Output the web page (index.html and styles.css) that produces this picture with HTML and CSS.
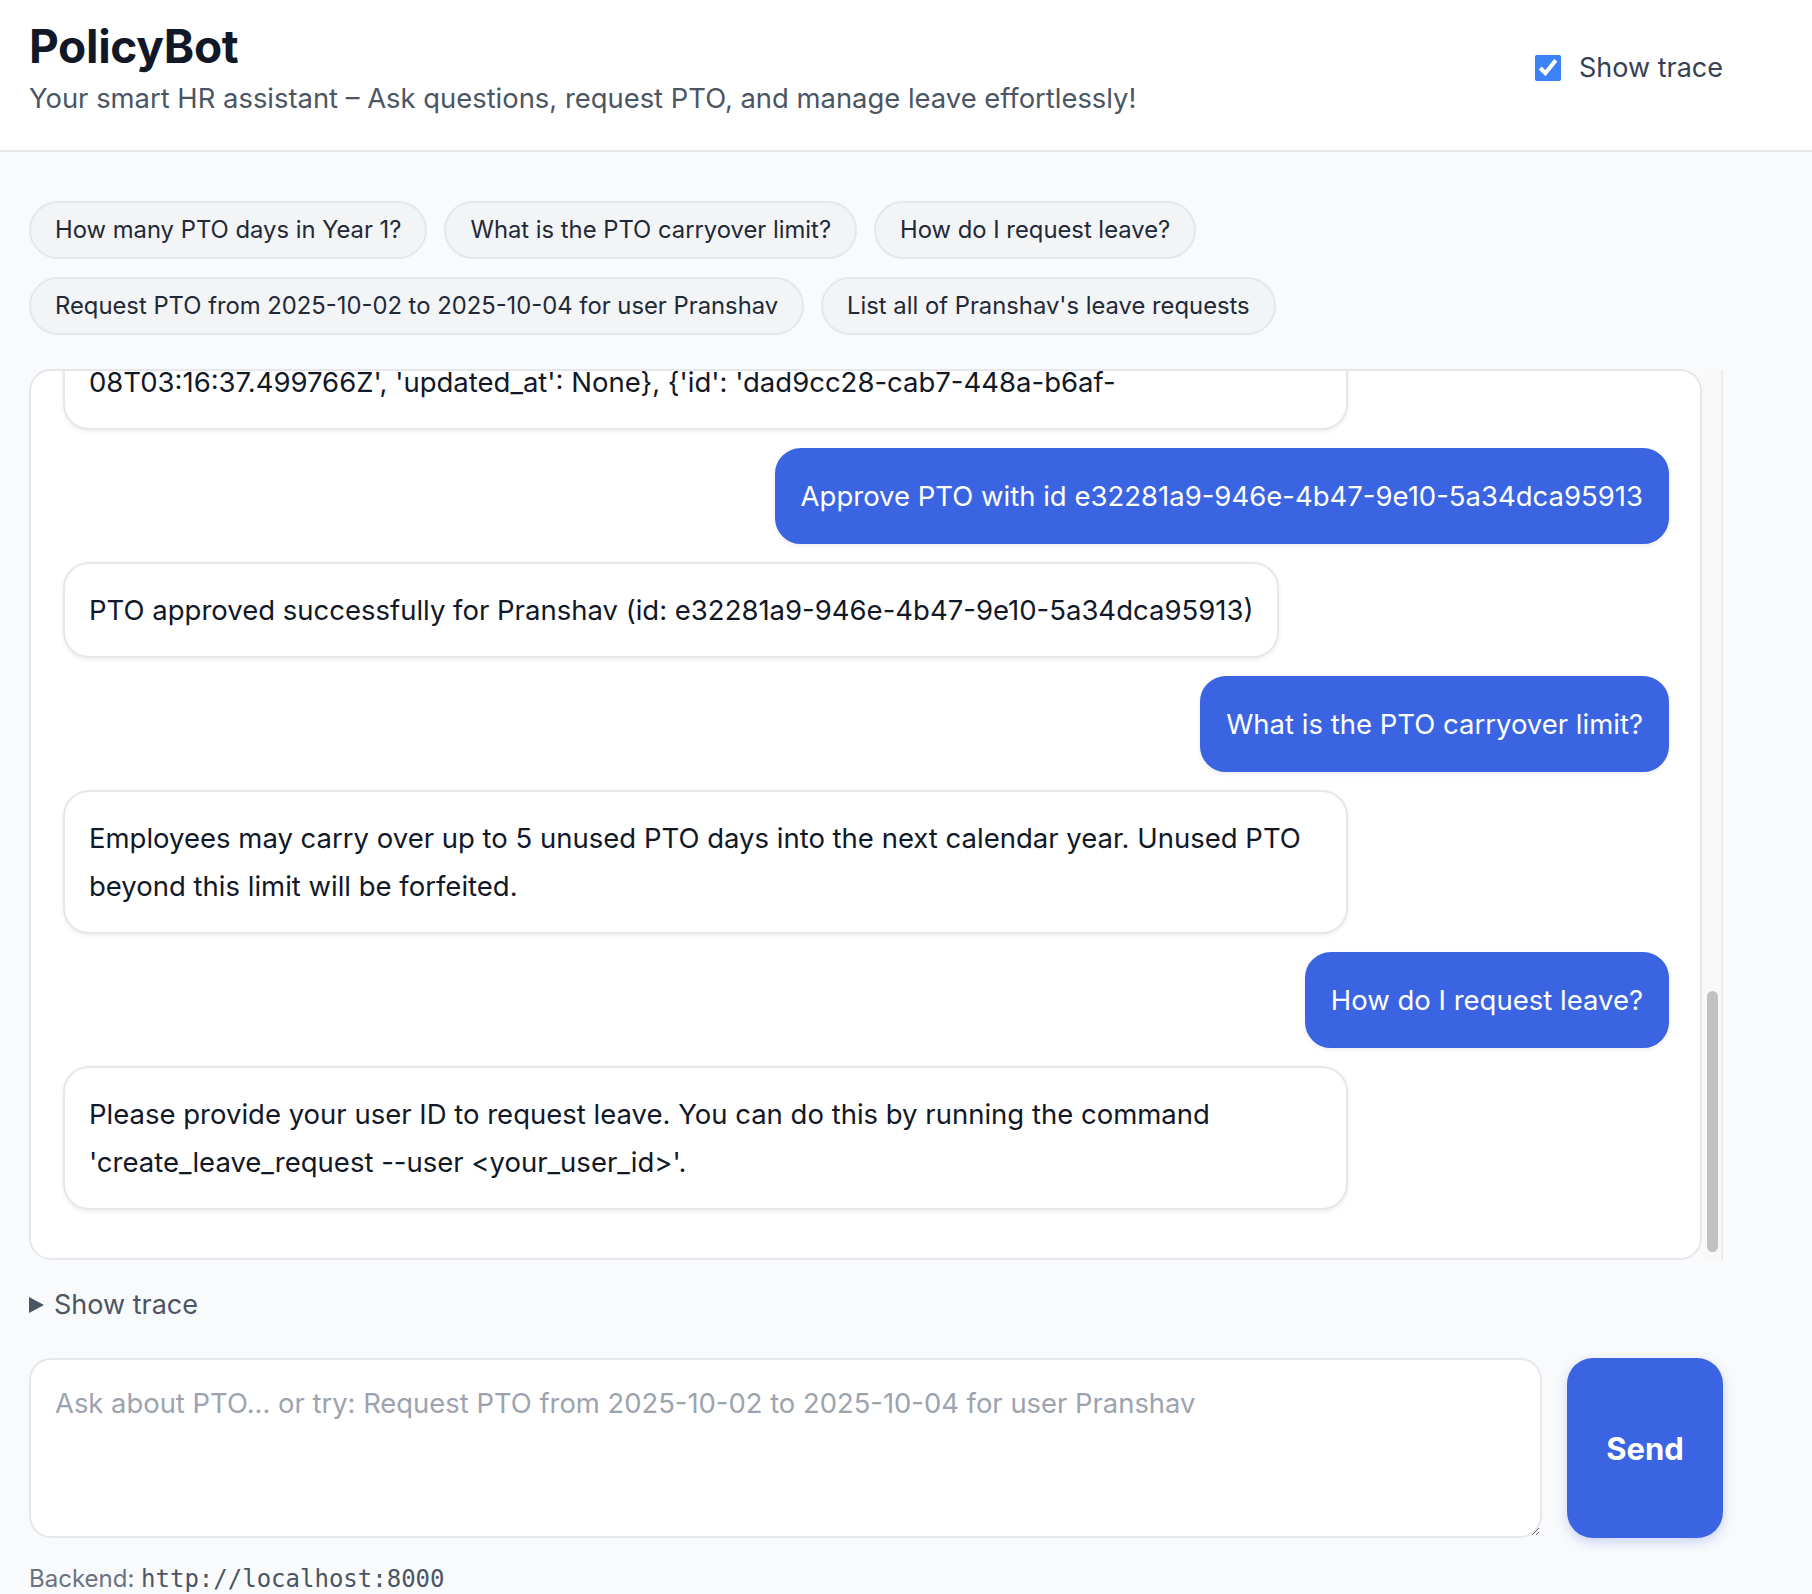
FILE: index.html
```html
<!DOCTYPE html>
<html lang="en">
<head>
<meta charset="utf-8">
<title>PolicyBot</title>
<link rel="stylesheet" href="styles.css">
</head>
<body>
<header class="topbar">
  <div class="topbar-inner">
    <div class="brand">
      <h1 class="title">PolicyBot</h1>
      <p class="subtitle">Your smart HR assistant – Ask questions, request PTO, and manage leave effortlessly!</p>
    </div>
    <label class="trace-toggle"><input type="checkbox" checked><span>Show trace</span></label>
  </div>
</header>
<main class="main">
  <div class="chips">
    <button class="chip" type="button">How many PTO days in Year 1?</button>
    <button class="chip" type="button">What is the PTO carryover limit?</button>
    <button class="chip" type="button">How do I request leave?</button>
    <button class="chip" type="button">Request PTO from 2025-10-02 to 2025-10-04 for user Pranshav</button>
    <button class="chip" type="button">List all of Pranshav's leave requests</button>
  </div>
  <section class="chat">
    <div class="chat-card">
      <div class="msg bot">Here are Pranshav's leave requests: [{'id': 'e32281a9-946e-4b47-9e10-5a34dca95913', 'user_id': 'Pranshav', 'start_date': '2025-10-02', 'end_date': '2025-10-04', 'status': 'pending', 'created_at': '2025-10-<br>08T03:16:37.499766Z', 'updated_at': None}, {'id': 'dad9cc28-cab7-448a-b6af-</div>
      <div class="msg user">Approve PTO with id e32281a9-946e-4b47-9e10-5a34dca95913</div>
      <div class="msg bot">PTO approved successfully for Pranshav (id: e32281a9-946e-4b47-9e10-5a34dca95913)</div>
      <div class="msg user">What is the PTO carryover limit?</div>
      <div class="msg bot">Employees may carry over up to 5 unused PTO days into the next calendar year. Unused PTO beyond this limit will be forfeited.</div>
      <div class="msg user">How do I request leave?</div>
      <div class="msg bot">Please provide your user ID to request leave. You can do this by running the command 'create_leave_request --user &lt;your_user_id&gt;'.</div>
    </div>
    <div class="scrolltrack"><div class="thumb"></div></div>
  </section>
  <details class="trace"><summary>Show trace</summary></details>
  <form class="composer">
    <textarea class="input" placeholder="Ask about PTO... or try: Request PTO from 2025-10-02 to 2025-10-04 for user Pranshav"></textarea>
    <button class="send" type="button">Send</button>
  </form>
  <p class="backend">Backend: <code>http://localhost:8000</code></p>
</main>
</body>
</html>
```
FILE: styles.css
```css
* { box-sizing: border-box; }

body {
  margin: 0;
  background: #f9fafb;
  font-family: Inter, "Noto Sans", sans-serif;
  color: #111827;
}

.topbar {
  background: #ffffff;
  border-bottom: 2px solid #e5e7eb;
}

.topbar-inner {
  width: 1694px;
  margin-left: 29px;
  display: flex;
  align-items: center;
  justify-content: space-between;
  padding: 19px 0 34px;
}

.title {
  margin: 0;
  font-size: 46px;
  line-height: 55px;
  font-weight: 700;
  letter-spacing: -0.3px;
  color: #111827;
}

.subtitle {
  margin: 6px 0 0;
  font-size: 27.4px;
  line-height: 36px;
  color: #4b5563;
}

.trace-toggle {
  display: flex;
  align-items: center;
  gap: 18px;
  font-size: 27px;
  color: #374151;
}

.trace-toggle input {
  width: 26px;
  height: 26px;
  margin: 0;
  accent-color: #3b82f6;
}

.main {
  width: 1694px;
  margin-left: 29px;
  padding-top: 49px;
}

.chips {
  display: flex;
  flex-wrap: wrap;
  gap: 18px 17px;
  margin-bottom: 34px;
}

.chip {
  font-family: Inter, "Noto Sans", sans-serif;
  font-size: 23.8px;
  line-height: 34px;
  padding: 10px 24px;
  border: 2px solid #e5e7eb;
  border-radius: 999px;
  background: #f3f4f6;
  color: #1f2937;
}

.chat {
  display: flex;
  height: 891px;
}

.chat-card {
  flex: 1;
  background: #ffffff;
  border: 2px solid #e5e7eb;
  border-radius: 22px;
  overflow: hidden;
  display: flex;
  flex-direction: column;
  justify-content: flex-end;
  gap: 18px;
  padding: 0 31px 48px 32px;
}

.msg {
  flex-shrink: 0;
  max-width: 80%;
  padding: 22px 24px;
  border-radius: 26px;
  font-size: 27.5px;
  line-height: 48px;
}

.msg.bot {
  align-self: flex-start;
  background: #ffffff;
  border: 2px solid #e5e7eb;
  box-shadow: 0 2px 4px rgba(17, 24, 39, 0.07);
  color: #111827;
}

.msg.user {
  align-self: flex-end;
  background: #3b64e3;
  border: 2px solid #3b64e3;
  box-shadow: 0 2px 4px rgba(17, 24, 39, 0.08);
  color: #ffffff;
}

.scrolltrack {
  width: 21px;
  margin-top: 1px;
  background: #f8f8f8;
  border-right: 2px solid #ececec;
  display: flex;
  flex-direction: column;
  justify-content: flex-end;
  padding: 0 0 8px 5px;
}

.thumb {
  width: 11px;
  height: 261px;
  background: #c1c1c1;
  border-radius: 6px;
}

.trace {
  margin-top: 26px;
  font-size: 27px;
  line-height: 38px;
  color: #4b5563;
}

.trace summary {
  list-style: none;
  display: flex;
  align-items: center;
  gap: 10px;
  cursor: pointer;
}

.trace summary::-webkit-details-marker { display: none; }

.trace summary::before {
  content: "";
  width: 0;
  height: 0;
  border-left: 15px solid #4b5563;
  border-top: 8.5px solid transparent;
  border-bottom: 8.5px solid transparent;
}

.composer {
  display: flex;
  gap: 25px;
  margin-top: 34px;
}

.input {
  flex: 1;
  height: 180px;
  padding: 24px;
  border: 2px solid #e5e7eb;
  border-radius: 22px;
  font-family: Inter, "Noto Sans", sans-serif;
  font-size: 27.4px;
  line-height: 39px;
  color: #111827;
  background: #ffffff;
  resize: vertical;
  outline: none;
}

.input::placeholder { color: #9ca3af; }

.send {
  width: 156px;
  height: 180px;
  border: none;
  border-radius: 26px;
  background: #3b64e3;
  color: #ffffff;
  font-family: Inter, "Noto Sans", sans-serif;
  font-size: 31px;
  font-weight: 700;
  box-shadow: 0 4px 12px rgba(59, 100, 227, 0.25);
}

.backend {
  margin: 26px 0 0;
  font-size: 24px;
  line-height: 30px;
  color: #6b7280;
}

.backend code {
  font-family: "DejaVu Sans Mono", "Liberation Mono", monospace;
  font-size: 24px;
  color: #4b5563;
}
```
